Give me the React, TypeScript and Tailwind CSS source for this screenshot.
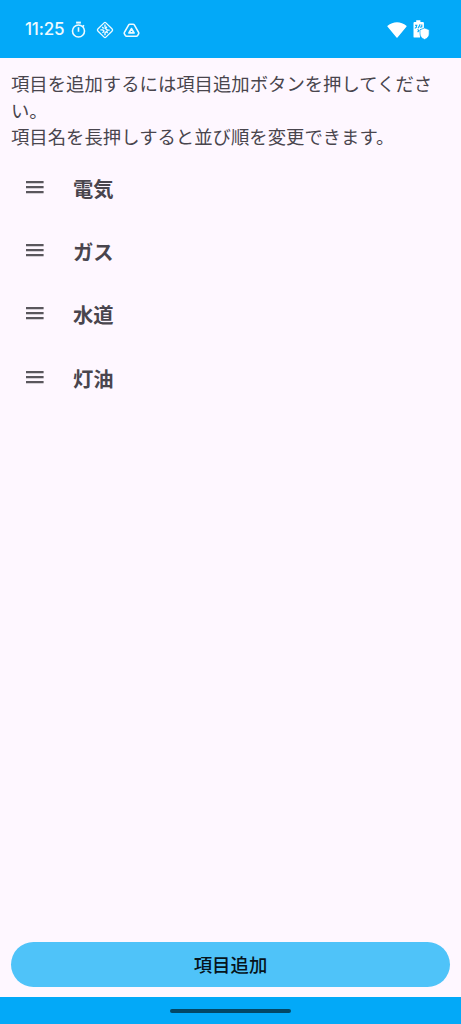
const items = ['電気', 'ガス', '水道', '灯油'];

function StatusBar() {
  return (
    <header className="flex h-[57.7px] shrink-0 items-start justify-between bg-[#03a9f8] text-[#effaff]">
      <div className="flex h-[59px] items-center pl-[25px]">
        <span className="w-[39px] whitespace-nowrap font-['Inter'] text-[17px] leading-none font-medium tracking-[-0.2px]">11:25</span>
        <svg className="ml-[7px]" width="15" height="18" viewBox="0 0 15 18" fill="none" stroke="currentColor" strokeWidth="1.6">
          <circle cx="7.5" cy="10" r="6" />
          <path d="M7.5 6.2v4.6M11.7 5.6l1.3-1.3" />
          <path d="M5.1 1.6h4.8" strokeWidth="2" />
        </svg>
        <svg className="ml-[10px]" width="18" height="18" viewBox="0 0 18 18" fill="none" stroke="currentColor" strokeWidth="1.3">
          <rect x="3.3" y="3.3" width="11.4" height="11.4" rx="1.3" transform="rotate(45 9 9)" />
          <path d="M9 3.6v3M6.2 6l1.5 1.5M4.3 8.9h2.5l1.7 1.7M11 5.8 9.3 7.5l2.2 1.6h2.2M6.4 11.7l1.4-1M9 14.3v-2.5l2.4-2M11.7 12l-1-1" strokeWidth="1.4" />
        </svg>
        <svg className="ml-[9px]" width="17" height="18" viewBox="0 0 17 18" fill="none" stroke="currentColor" strokeWidth="1.6" strokeLinejoin="round">
          <path d="M7 3.2h3c.6 0 1 .2 1.3.7l4.3 7.4c.3.5.3 1 0 1.5l-.9 1.6c-.3.5-.8.8-1.4.8H3.7c-.6 0-1.1-.3-1.4-.8l-.9-1.6c-.3-.5-.3-1 0-1.5l4.3-7.4c.3-.5.7-.7 1.3-.7Z" />
          <path d="M8.5 7.6 11 11.9H6Z" strokeWidth="1.8" />
        </svg>
      </div>
      <div className="flex h-[59px] items-center pr-[31px]">
        <svg width="20" height="18" viewBox="0 0 20 18" fill="#fff">
          <path d="M.6 4.8C6-.1 14-.1 19.4 4.8c.3.3.3.6 0 .9L10.5 16.6a.7.7 0 0 1-1 0L.6 5.7a.6.6 0 0 1 0-.9Z" />
        </svg>
        <svg className="ml-[6px]" width="17" height="22" viewBox="0 0 17 22" fill="#fff">
          <path d="M3.2 1.2h4.2v1.9H10c.5 0 .9.4.9.9v6H7v8.6H1.4c-.5 0-.9-.4-.9-.9V4c0-.5.4-.9.9-.9h1.8Z" />
          <path d="M2 6.2h2.4M3.4 6v2.2L1.8 9.4M5 9.2 7.2 5.4M6.8 8.3l2-.5V5.4M4.6 10.4l1.3 1.3-1.3 1.5" fill="none" stroke="#03a9f8" strokeWidth="1.1" />
          <path d="M11.6 9 16.2 10.7v4.3c0 2.5-1.8 4.4-4.6 5.5C8.8 19.4 7 17.500 7 15v-4.300Z" stroke="#03a9f8" strokeWidth=".7" strokeLinejoin="round" />
        </svg>
      </div>
    </header>
  );
}

function DragHandle() {
  return (
    <svg className="ml-[26px] shrink-0" width="18" height="14" viewBox="0 0 18 14" stroke="#5a575d" strokeWidth="2.1">
      <path d="M0 2.1h17.600M0 7.100h17.600M0 12.100h17.600" />
    </svg>
  );
}

export default function App() {
  return (
    <div className="flex h-[1024px] w-full flex-col overflow-hidden bg-[#fef7ff] font-['Noto_Sans_CJK_JP',sans-serif] text-[#49454d]">
      <StatusBar />
      <main className="flex min-h-0 flex-1 flex-col">
        <p className="mt-[12.8px] px-[11px] text-[18.36px] leading-[26.5px]">
          項目を追加するには項目追加ボタンを押してください。
          <br />
          項目名を長押しすると並び順を変更できます。
        </p>
        <ul className="mt-[6px]">
          {items.map((item) => (
            <li key={item} className="flex h-[63.3px] items-center pb-[2px]">
              <DragHandle />
              <span className="ml-[29px] pt-[2px] text-[20.3px] leading-[30px] font-bold">{item}</span>
            </li>
          ))}
        </ul>
        <button className="mx-[11px] mt-auto mb-[9.7px] flex h-[45.3px] shrink-0 items-center justify-center rounded-full bg-[#4fc3f9] pb-px text-[18.4px] leading-none font-medium text-[#06141c]">
          項目追加
        </button>
      </main>
      <footer className="flex h-[27px] shrink-0 items-center justify-center bg-[#03a9f8]">
        <div className="h-[4px] w-[121px] rounded-full bg-[#034766]" />
      </footer>
    </div>
  );
}
